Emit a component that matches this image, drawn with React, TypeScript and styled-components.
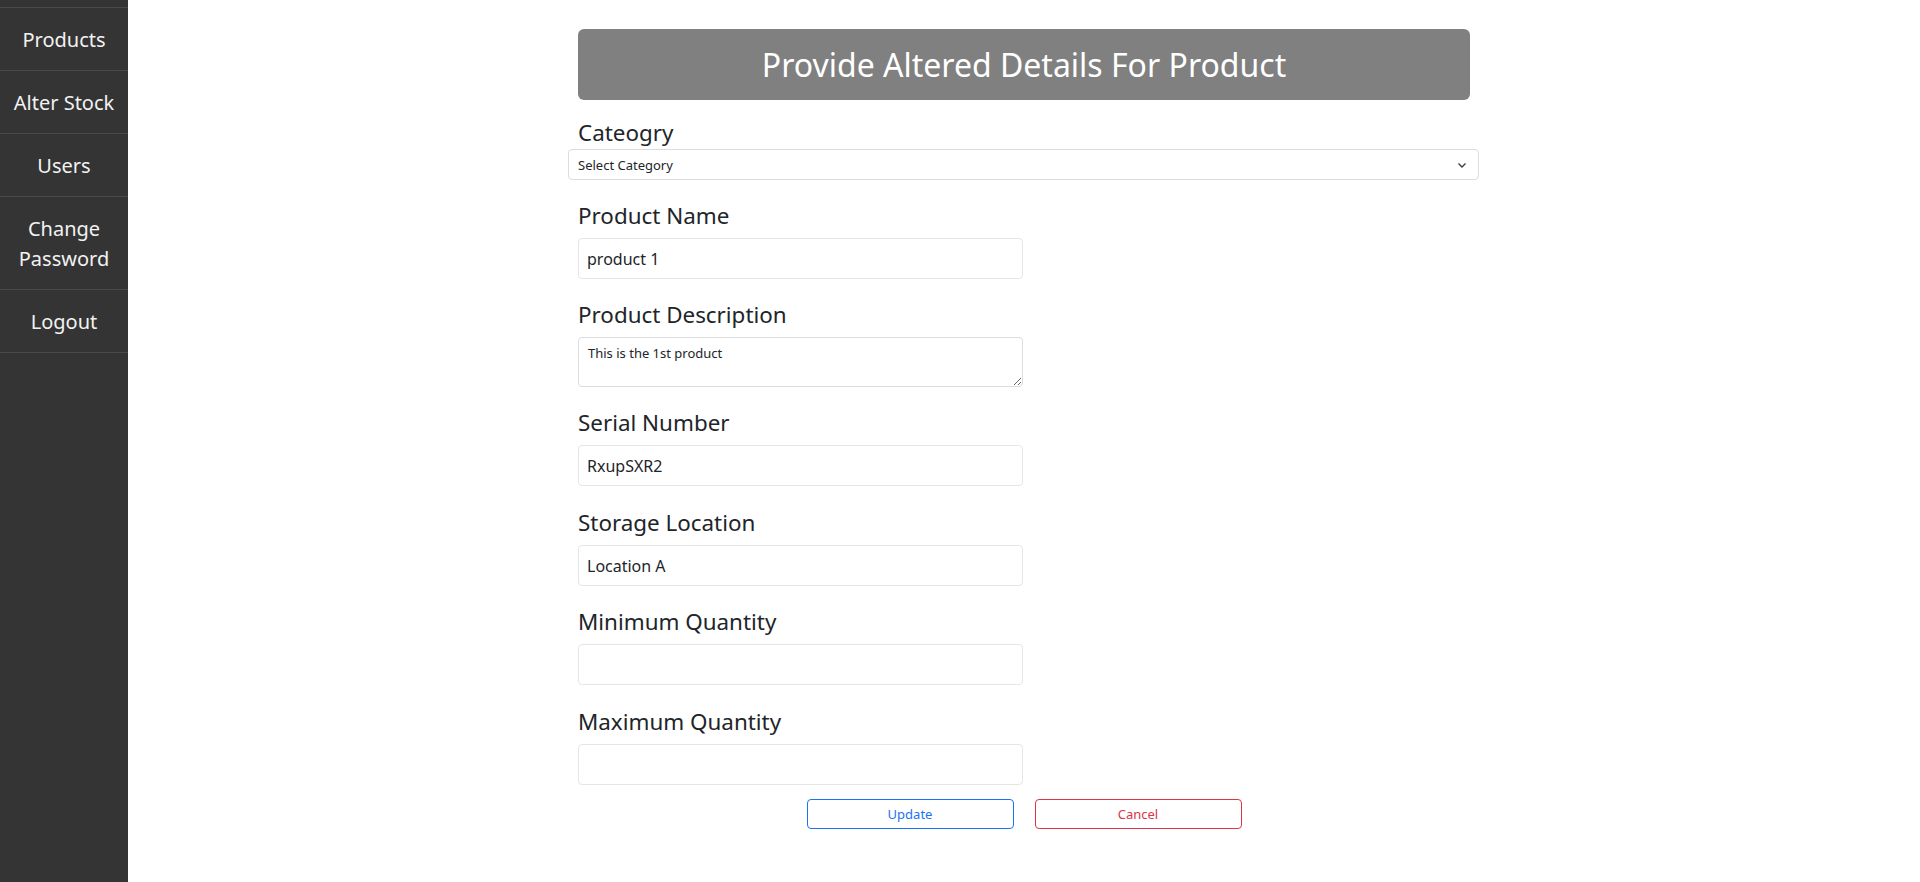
import React from "react";
import styled, { createGlobalStyle } from "styled-components";

const GlobalStyle = createGlobalStyle`
  html, body { margin: 0; padding: 0; background: #ffffff; }
  body { font-family: "Noto Sans", "Open Sans", sans-serif; color: #212529; }
  * { box-sizing: border-box; }
`;

const Layout = styled.div`
  display: flex;
  min-height: 882px;
`;

const Sidebar = styled.nav`
  width: 128px;
  flex: 0 0 128px;
  background: #343434;
  padding-top: 7px;
  display: flex;
  flex-direction: column;
`;

const NavItem = styled.a`
  display: block;
  padding: 17px 6px 15px;
  border-top: 1px solid #4a4a4a;
  color: #f2f2f2;
  text-align: center;
  font-size: 20px;
  line-height: 30px;
  text-decoration: none;
  &:last-child { border-bottom: 1px solid #4a4a4a; }
`;

const Main = styled.main`
  flex: 1;
  display: flex;
  justify-content: center;
`;

const Form = styled.form`
  width: 892px;
  padding-top: 29px;
  display: flex;
  flex-direction: column;
`;

const Banner = styled.h1`
  margin: 0;
  height: 71px;
  border-radius: 6px;
  background: #808080;
  color: #ffffff;
  display: flex;
  align-items: center;
  justify-content: center;
  font-size: 32px;
  font-weight: 400;
`;

const Label = styled.label<{ $top: number; $bottom: number }>`
  display: block;
  margin-top: ${(p) => p.$top}px;
  margin-bottom: ${(p) => p.$bottom}px;
  font-size: 22.4px;
  line-height: 29px;
  color: #212529;
`;

const SelectWrap = styled.div`
  position: relative;
  margin: 0 -9px 0 -10px;
`;

const Select = styled.select`
  width: 100%;
  height: 31px;
  appearance: none;
  border: 1px solid #dcdcdc;
  border-radius: 4px;
  background: #fff;
  padding: 1px 9px 0;
  font-family: "Noto Sans", sans-serif;
  font-size: 13px;
  color: #212529;
`;

const Chevron = styled.svg`
  position: absolute;
  right: 12px;
  top: 12px;
  pointer-events: none;
`;

const Input = styled.input`
  width: 445px;
  height: 41px;
  border: 1px solid #e6e6e6;
  border-radius: 4px;
  padding: 0 8px;
  font-family: "Noto Sans", sans-serif;
  font-size: 16px;
  color: #212529;
  background: #fff;
`;

const TextArea = styled.textarea`
  width: 445px;
  height: 50px;
  border: 1px solid #dcdcdc;
  border-radius: 4px;
  padding: 6px 9px;
  font-family: "Noto Sans", sans-serif;
  font-size: 13px;
  color: #212529;
  resize: vertical;
`;

const Actions = styled.div`
  display: flex;
  justify-content: center;
  gap: 21px;
  margin-top: 14px;
`;

const Button = styled.button<{ $tone: string }>`
  width: 207px;
  height: 30px;
  border: 1px solid ${(p) => p.$tone};
  color: ${(p) => p.$tone};
  background: #fff;
  border-radius: 4px;
  font-family: "Noto Sans", sans-serif;
  font-size: 13px;
`;

const fields: { label: string; value: string; area?: boolean; gap: number }[] = [
  { label: "Product Name", value: "product 1", gap: 21 },
  { label: "Product Description", value: "This is the 1st product", area: true, gap: 21 },
  { label: "Serial Number", value: "RxupSXR2", gap: 21 },
  { label: "Storage Location", value: "Location A", gap: 22 },
  { label: "Minimum Quantity", value: "", gap: 21 },
  { label: "Maximum Quantity", value: "", gap: 22 },
];

export default function App() {
  return (
    <>
      <GlobalStyle />
      <Layout>
        <Sidebar>
          <NavItem>Products</NavItem>
          <NavItem>Alter Stock</NavItem>
          <NavItem>Users</NavItem>
          <NavItem>Change Password</NavItem>
          <NavItem>Logout</NavItem>
        </Sidebar>
        <Main>
          <Form onSubmit={(e) => e.preventDefault()}>
            <Banner>Provide Altered Details For Product</Banner>
            <Label $top={18} $bottom={2}>Cateogry</Label>
            <SelectWrap>
              <Select defaultValue="">
                <option value="">Select Category</option>
              </Select>
              <Chevron width="10" height="8" viewBox="0 0 10 8">
                <path d="M1.5 2.5 L5 6 L8.5 2.5" fill="none" stroke="#343a40" strokeWidth="1.3" />
              </Chevron>
            </SelectWrap>
            {fields.map((f) => (
              <React.Fragment key={f.label}>
                <Label $top={f.gap} $bottom={8}>{f.label}</Label>
                {f.area ? (
                  <TextArea defaultValue={f.value} />
                ) : (
                  <Input defaultValue={f.value} />
                )}
              </React.Fragment>
            ))}
            <Actions>
              <Button type="button" $tone="#1a73f0">Update</Button>
              <Button type="button" $tone="#dc3545">Cancel</Button>
            </Actions>
          </Form>
        </Main>
      </Layout>
    </>
  );
}
